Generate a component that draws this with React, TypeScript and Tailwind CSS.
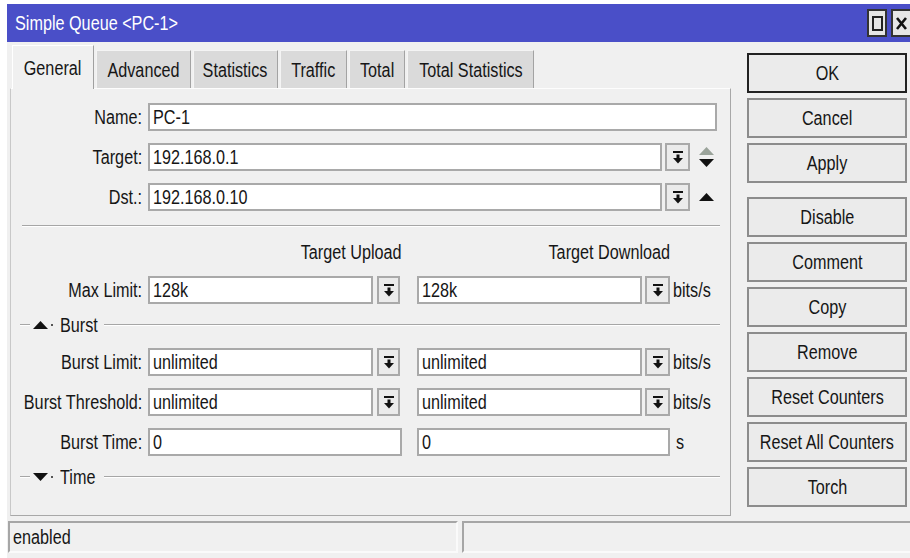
import type { ReactNode } from "react";

const FONT = "font-['Liberation_Sans',Arial,sans-serif]";

const tabs = [
  { name: "General", w: "w-[82px]", active: true },
  { name: "Advanced", w: "w-[95px]" },
  { name: "Statistics", w: "w-[85px]" },
  { name: "Traffic", w: "w-[67px]" },
  { name: "Total", w: "w-[56px]" },
  { name: "Total Statistics", w: "w-[127px]" },
];

const actions = ["Disable", "Comment", "Copy", "Remove", "Reset Counters", "Reset All Counters", "Torch"];

// Winbox draws its labels in a narrow face; squeeze the regular one to fit
function T({ children, o = "origin-left" }: { children: ReactNode; o?: string }) {
  return <span className={`inline-block whitespace-nowrap leading-none scale-x-[0.81] ${o}`}>{children}</span>;
}

function DropIcon() {
  return (
    <svg width="10" height="13" viewBox="0 0 10 13" className="block">
      <rect x="0" y="0" width="10" height="2" fill="#111" />
      <rect x="3.5" y="3.5" width="3" height="4" fill="#111" />
      <polygon points="0,7 10,7 5,12.5" fill="#111" />
    </svg>
  );
}

function DropButton({ w = "w-[25px]" }: { w?: string }) {
  return (
    <div className={`${w} h-[28px] shrink-0 bg-[#ebebeb] border-2 border-[#a9a9a9] flex items-center justify-center`}>
      <DropIcon />
    </div>
  );
}

function Field({ value, w }: { value?: string; w: string }) {
  return (
    <div className={`${w} h-[28px] shrink-0 bg-white border-2 border-[#a9a9a9] flex items-center pl-[3px] overflow-hidden`}>
      {value && <T>{value}</T>}
    </div>
  );
}

function Row({ label, children, className = "" }: { label?: string; children: ReactNode; className?: string }) {
  return (
    <div className={`flex items-center h-[28px] ${className}`}>
      <div className="w-[131px] shrink-0 flex justify-end">
        <T o="origin-right">{label}</T>
      </div>
      <div className="ml-[6px] flex items-center">{children}</div>
    </div>
  );
}

function Triangle({ up, color = "#111" }: { up?: boolean; color?: string }) {
  return (
    <svg width="15" height="8" viewBox="0 0 15 8" className="block">
      <polygon points={up ? "0,8 15,8 7.5,0" : "0,0 15,0 7.5,8"} fill={color} />
    </svg>
  );
}

function Etched({ className = "" }: { className?: string }) {
  return <div className={`h-0 border-t border-t-[#a6a6a6] border-b border-b-white ${className}`} />;
}

function Section({ title, open }: { title: string; open?: boolean }) {
  return (
    <div className="flex items-center h-[22px] ml-[9px] w-[700px] mt-[10px]">
      <Etched className="w-[10px]" />
      <div className="ml-[3px]">
        <Triangle up={open} />
      </div>
      <div className="ml-[3px] w-[2px] h-[2px] bg-[#555]" />
      <div className="ml-[7px] w-[37px]">
        <T>{title}</T>
      </div>
      <Etched className="ml-[7px] flex-1" />
    </div>
  );
}

function ActionButton({ label, primary }: { label: string; primary?: boolean }) {
  return (
    <div
      className={`h-[40px] w-[160px] flex items-center justify-center bg-[#ebebeb] border-2 ${
        primary ? "border-[#222]" : "border-[#8c8c8c]"
      }`}
    >
      <T o="origin-center">{label}</T>
    </div>
  );
}

function LimitRow({ label, value }: { label: string; value: string }) {
  return (
    <Row label={label} className="mt-[12px]">
      <Field value={value} w="w-[225px]" />
      <div className="ml-[4px]">
        <DropButton w="w-[23px]" />
      </div>
      <div className="ml-[17px]">
        <Field value={value} w="w-[225px]" />
      </div>
      <div className="ml-[3px]">
        <DropButton />
      </div>
      <span className="ml-[3px]">
        <T>bits/s</T>
      </span>
    </Row>
  );
}

export default function App() {
  return (
    <div className={`w-[910px] h-[558px] bg-white overflow-hidden pt-[4px] pl-[7px] ${FONT} text-[20px] text-[#161616]`}>
      <div className="h-[554px] bg-[#f0f0f0] flex flex-col">
        {/* caption */}
        <div className="h-[38px] bg-[#4a4fc8] flex items-center pl-[8px] shrink-0">
          <span className="text-white text-[20px]">
            <T>Simple Queue &lt;PC-1&gt;</T>
          </span>
          <div className="ml-auto flex items-center gap-[4px]">
            <div className="w-[20px] h-[28px] bg-[#e6e6e6] border-2 border-[#333] flex items-center justify-center">
              <div className="w-[11px] h-[15px] border-2 border-[#222]" />
            </div>
            <div className="w-[19px] h-[28px] bg-[#e6e6e6] border-2 border-r-0 border-[#333] flex items-center justify-center">
              <svg width="11" height="13" viewBox="0 0 11 13">
                <path d="M1 1 L10 12 M10 1 L1 12" stroke="#111" strokeWidth="2.6" />
              </svg>
            </div>
          </div>
        </div>

        <div className="flex">
          {/* tabs + form */}
          <div className="ml-[3px] w-[721px]">
            <div className="h-[46px] flex items-end pl-[2px] gap-[2px]">
              {tabs.map((t) =>
                t.active ? (
                  <div
                    key={t.name}
                    className={`${t.w} h-[44px] translate-y-[1px] relative z-10 bg-[#f0f0f0] border-l border-l-white border-t border-t-white border-r border-r-[#a0a0a0] flex items-center justify-center`}
                  >
                    <T o="origin-center">{t.name}</T>
                  </div>
                ) : (
                  <div
                    key={t.name}
                    className={`${t.w} h-[38px] bg-[#dadada] border-l border-l-[#f4f4f4] border-t border-t-[#f4f4f4] border-r border-r-[#a3a3a3] flex items-center justify-center`}
                  >
                    <T o="origin-center">{t.name}</T>
                  </div>
                )
              )}
            </div>

            <div className="h-[428px] border border-t-[#fdfdfd] border-l-[#c8c8c8] border-r-[#a8a8a8] border-b-[#a8a8a8] bg-[#f0f0f0] flex flex-col">
              <Row label="Name:" className="mt-[14px]">
                <Field value="PC-1" w="w-[569px]" />
              </Row>
              <Row label="Target:" className="mt-[12px]">
                <Field value="192.168.0.1" w="w-[514px]" />
                <div className="ml-[3px]">
                  <DropButton />
                </div>
                <div className="ml-[9px] flex flex-col gap-[4px]">
                  <Triangle up color="#9aa39a" />
                  <Triangle />
                </div>
              </Row>
              <Row label="Dst.:" className="mt-[12px]">
                <Field value="192.168.0.10" w="w-[514px]" />
                <div className="ml-[3px]">
                  <DropButton />
                </div>
                <div className="ml-[9px]">
                  <Triangle up />
                </div>
              </Row>

              <Etched className="mt-[14px] ml-[11px] w-[698px]" />

              <div className="flex items-center h-[24px] mt-[13px]">
                <div className="w-[137px]" />
                <div className="w-[254px] flex justify-end">
                  <T o="origin-right">Target Upload</T>
                </div>
                <div className="ml-[15px] w-[253px] flex justify-end">
                  <T o="origin-right">Target Download</T>
                </div>
              </div>

              <LimitRow label="Max Limit:" value="128k" />

              <Section title="Burst" open />

              <LimitRow label="Burst Limit:" value="unlimited" />
              <LimitRow label="Burst Threshold:" value="unlimited" />
              <Row label="Burst Time:" className="mt-[12px]">
                <Field value="0" w="w-[254px]" />
                <div className="ml-[15px]">
                  <Field value="0" w="w-[253px]" />
                </div>
                <span className="ml-[6px]">
                  <T>s</T>
                </span>
              </Row>

              <Section title="Time" />
            </div>
          </div>

          {/* dialog buttons */}
          <div className="ml-[16px] pt-[11px] flex flex-col">
            <ActionButton label="OK" primary />
            <div className="mt-[5px]">
              <ActionButton label="Cancel" />
            </div>
            <div className="mt-[5px]">
              <ActionButton label="Apply" />
            </div>
            <div className="mt-[14px] flex flex-col gap-[5px]">
              {actions.map((a) => (
                <ActionButton key={a} label={a} />
              ))}
            </div>
          </div>
        </div>

        {/* status bar */}
        <div className="mt-[5px] h-[32px] flex gap-[4px] ml-[1px]">
          <div className="w-[450px] border-2 border-t-[#a6a6a6] border-l-[#a6a6a6] border-r-[#fafafa] border-b-[#fafafa] flex items-center pl-[3px]">
            <T>enabled</T>
          </div>
          <div className="flex-1 border-2 border-t-[#a6a6a6] border-l-[#a6a6a6] border-r-0 border-b-[#fafafa]" />
        </div>
      </div>
    </div>
  );
}
